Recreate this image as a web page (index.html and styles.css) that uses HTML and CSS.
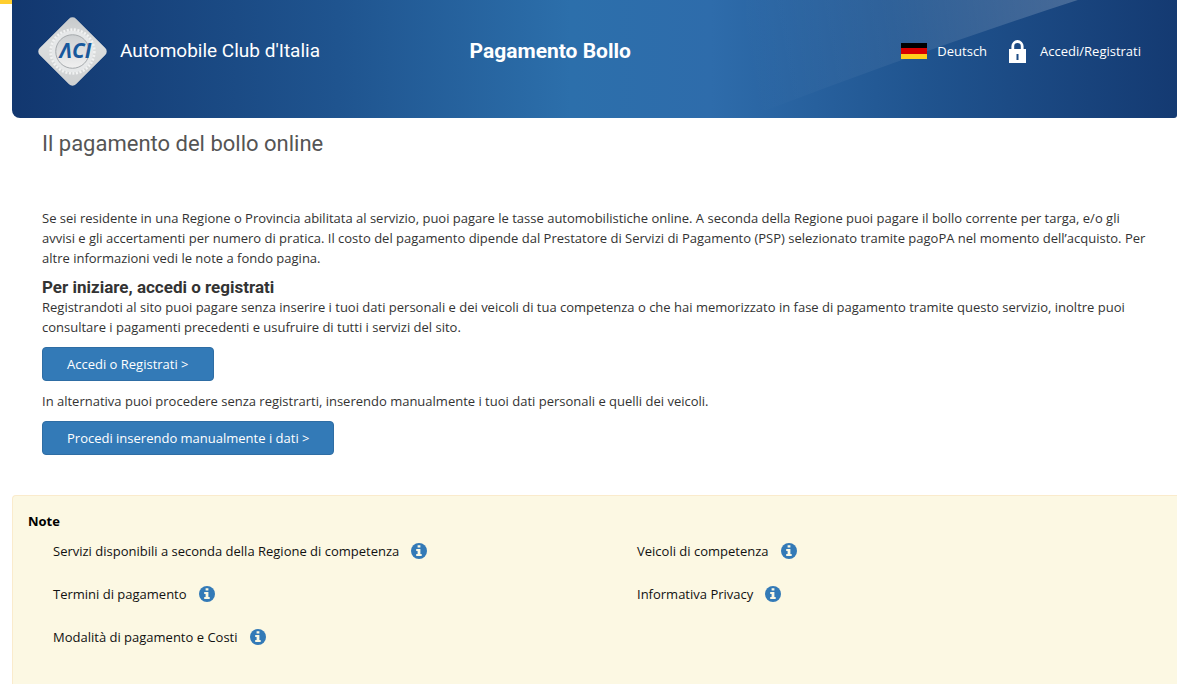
FILE: index.html
```html
<!DOCTYPE html>
<html lang="it">
<head>
<meta charset="utf-8">
<meta name="viewport" content="width=device-width, initial-scale=1">
<title>Pagamento Bollo</title>
<link rel="stylesheet" href="styles.css">
</head>
<body>
<svg class="sprite" aria-hidden="true">
  <symbol id="info" viewBox="0 0 16 16">
    <circle cx="8" cy="8" r="8" fill="#337ab7"/>
    <path d="M6.6 2.3h2.8v2.3H6.6zM5.2 6.1h4.2v5h1.3v1.9H5.2v-1.9h1.4V8H5.2z" fill="#fcf8e3"/>
  </symbol>
</svg>
<header class="header">
  <svg class="header-beam" viewBox="0 0 430 118" preserveAspectRatio="none" aria-hidden="true">
    <defs>
      <linearGradient id="beam" gradientUnits="userSpaceOnUse" x1="0" x2="330" y1="60" y2="0">
        <stop offset="0" stop-color="#fff" stop-opacity="0"/>
        <stop offset=".45" stop-color="#fff" stop-opacity=".06"/>
        <stop offset="1" stop-color="#fff" stop-opacity=".2"/>
      </linearGradient>
    </defs>
    <path d="M0 0H331Q165 54 0 118Z" fill="url(#beam)"/>
  </svg>
  <a class="brand" href="#">
    <svg class="brand-mark" viewBox="0 0 72 72" aria-hidden="true">
      <defs>
        <linearGradient id="silver" x1="0" x2="1" y1="0" y2="1">
          <stop offset="0" stop-color="#c5c8ca"/>
          <stop offset=".4" stop-color="#dcdede"/>
          <stop offset="1" stop-color="#cdcfd0"/>
        </linearGradient>
        <linearGradient id="dial" x1="0" x2="0" y1="0" y2="1">
          <stop offset="0" stop-color="#cdd0d2"/>
          <stop offset="1" stop-color="#f0f0f0"/>
        </linearGradient>
      </defs>
      <rect x="10" y="10" width="52" height="52" rx="5" transform="rotate(45 36 36)" fill="url(#silver)"/>
      <circle cx="36" cy="36" r="22" fill="none" stroke="#f1f2f2" stroke-width="3" stroke-dasharray="2 1.6"/>
      <circle cx="36" cy="36" r="21" fill="#e6e8e9"/>
      <circle cx="36" cy="36" r="17" fill="url(#dial)" stroke="#a4a8ab"/>
      <text class="brand-letters" x="39" y="43" text-anchor="middle">ΛCI</text>
    </svg>
    <span class="brand-name">Automobile Club d'Italia</span>
  </a>
  <div class="header-title">Pagamento Bollo</div>
  <nav class="header-nav">
    <a class="nav-link language" href="#">
      <svg class="flag" viewBox="0 0 26 16" aria-hidden="true"><path fill="#000" d="M0 0h26v6H0z"/><path fill="#d80000" d="M0 5h26v6H0z"/><path fill="#ffce1c" d="M0 11h26v5H0z"/></svg>
      Deutsch
    </a>
    <a class="nav-link login" href="#">
      <svg class="lock" viewBox="0 0 17 23" aria-hidden="true"><path d="M3.8 10V6.2a4.7 4.7 0 0 1 9.4 0V10" fill="none" stroke="#fff" stroke-width="2.8"/><path fill="#fff" fill-rule="evenodd" d="M0 9h17v14H0zM7.5 14v6h2v-6z"/></svg>
      Accedi/Registrati
    </a>
  </nav>
</header>
<main class="main">
  <h1 class="page-title">Il pagamento del bollo online</h1>
  <p class="text">Se sei residente in una Regione o Provincia abilitata al servizio, puoi pagare le tasse automobilistiche online. A seconda della Regione puoi pagare il bollo corrente per targa, e/o gli avvisi e gli accertamenti per numero di pratica. Il costo del pagamento dipende dal Prestatore di Servizi di Pagamento (PSP) selezionato tramite pagoPA nel momento dell’acquisto. Per altre informazioni vedi le note a fondo pagina.</p>
  <h2 class="section-title">Per iniziare, accedi o registrati</h2>
  <p class="text">Registrandoti al sito puoi pagare senza inserire i tuoi dati personali e dei veicoli di tua competenza o che hai memorizzato in fase di pagamento tramite questo servizio, inoltre puoi consultare i pagamenti precedenti e usufruire di tutti i servizi del sito.</p>
  <button class="button" type="button">Accedi o Registrati &gt;</button>
  <p class="text">In alternativa puoi procedere senza registrarti, inserendo manualmente i tuoi dati personali e quelli dei veicoli.</p>
  <button class="button" type="button">Procedi inserendo manualmente i dati &gt;</button>
</main>
<section class="notes">
  <h2 class="notes-title">Note</h2>
  <div class="notes-columns">
    <ul class="notes-list">
      <li><a class="note" href="#">Servizi disponibili a seconda della Regione di competenza <svg class="info"><use href="#info"/></svg></a></li>
      <li><a class="note" href="#">Termini di pagamento <svg class="info"><use href="#info"/></svg></a></li>
      <li><a class="note" href="#">Modalità di pagamento e Costi <svg class="info"><use href="#info"/></svg></a></li>
    </ul>
    <ul class="notes-list">
      <li><a class="note" href="#">Veicoli di competenza <svg class="info"><use href="#info"/></svg></a></li>
      <li><a class="note" href="#">Informativa Privacy <svg class="info"><use href="#info"/></svg></a></li>
    </ul>
  </div>
</section>
</body>
</html>
```
FILE: styles.css
```css
* { box-sizing: border-box; }

body {
  margin: 0;
  padding-left: 12px;
  background: linear-gradient(#ffce2e, #ffce2e) 0 0 / 12px 4px no-repeat #fff;
  color: #333;
  font: 13px/20px "Open Sans", sans-serif;
}

h1, h2, p, ul { margin: 0; padding: 0; }
ul { list-style: none; }
a { color: inherit; text-decoration: none; }

.sprite { position: absolute; width: 0; height: 0; }

.header {
  position: relative;
  display: grid;
  grid-template-columns: 39% 1fr auto;
  align-items: center;
  min-height: 118px;
  padding: 0 36px 16px 25px;
  overflow: hidden;
  border-radius: 0 0 3px 8px;
  background: linear-gradient(90deg, #12376f 0%, #1f548f 28%, #2c6fab 48%, #2e6cab 60%, #20548f 78%, #143a72 100%);
  color: #fff;
}

.header-beam {
  position: absolute;
  top: 0;
  right: 0;
  width: 37%;
  height: 100%;
}

.brand, .header-title, .header-nav { position: relative; }

.brand {
  display: flex;
  align-items: center;
  gap: 12px;
}

.brand-mark { width: 71px; height: 71px; }
.brand-letters { font: bold italic 21px "Open Sans", sans-serif; fill: #17589c; }
.brand-name { font: 19px/32px Roboto, sans-serif; }
.header-title { padding-left: 2px; font: bold 21px/32px Roboto, sans-serif; }

.header-nav { display: flex; gap: 22px; }
.nav-link { display: flex; align-items: center; }
.language { gap: 10px; }
.login { gap: 14px; }
.flag { width: 26px; height: 16px; }
.lock { width: 17px; height: 23px; }

.main { padding: 8px 30px 40px; }

.page-title {
  margin-bottom: 46px;
  color: #555;
  font: 22px/36px Roboto, sans-serif;
}

.section-title {
  margin-top: 10px;
  font: bold 17px/19px Roboto, sans-serif;
}

.button {
  display: block;
  margin: 10px 0;
  padding: 6px 24px;
  border: 1px solid #2e6da4;
  border-radius: 4px;
  background: #337ab7;
  color: #fff;
  font: inherit;
}
.main .button:last-child { margin-bottom: 0; }

.notes {
  padding: 15px;
  min-height: 200px;
  border: 1px solid #faebcc;
  border-right: 0;
  border-radius: 4px 0 0 0;
  background: #fcf8e3;
  color: #111;
}

.notes-title {
  color: #000;
  font-size: 13px;
  line-height: 20px;
}

.notes-columns {
  display: grid;
  grid-template-columns: 1fr 1fr;
  gap: 32px;
  padding: 10px 0 0 25px;
  margin-right: -27px;
}

.notes-list { display: grid; align-content: start; gap: 23px; }
.note { display: flex; align-items: center; gap: 12px; }
.info { width: 16px; height: 16px; }
```
